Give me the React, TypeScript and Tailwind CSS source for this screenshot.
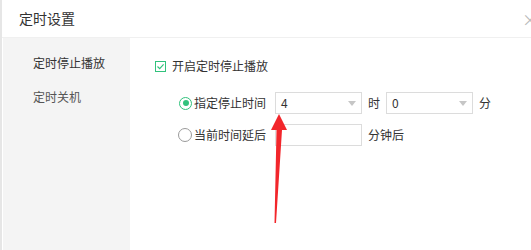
import React from 'react';

const font = { fontFamily: '"Noto Sans CJK SC", "Noto Sans", sans-serif' };

const Caret = () => (
  <svg width="8" height="5" viewBox="0 0 8 5" className="mr-[5px]">
    <path d="M0 0 L8 0 L4 5 Z" fill="#c6c6c6" />
  </svg>
);

const Select = ({ value }: { value: string }) => (
  <div className="flex h-[22px] w-[87px] items-center justify-between border border-[#dcdcdc] bg-white pl-[5px]">
    <span className="text-[12px] text-[#333]">{value}</span>
    <Caret />
  </div>
);

export default function App() {
  return (
    <div
      className="relative flex h-[250px] w-[531px] flex-col overflow-hidden border-l-2 border-[#e6e6e6] bg-white"
      style={font}
    >
      <div className="flex h-[38px] shrink-0 items-center justify-between border-b border-[#f0f0f0] pl-[17px]">
        <span className="text-[14px] text-[#333]">定时设置</span>
        <span className="mr-[-7px] text-[16px] text-[#bbb]">×</span>
      </div>

      <div className="flex flex-1">
        <div className="ml-px flex w-[127px] flex-col gap-[22px] bg-[#f4f4f4] pl-[30px] pt-[19px]">
          <span className="text-[12px] leading-[12px] text-[#333]">定时停止播放</span>
          <span className="text-[12px] leading-[12px] text-[#555]">定时关机</span>
        </div>

        <div className="flex flex-1 flex-col pl-[25px] pt-[22px]">
          <div className="flex h-[12px] items-center gap-[6px]">
            <span className="flex h-[11px] w-[11px] items-center justify-center border border-[#31c27c]">
              <svg width="9" height="9" viewBox="0 0 9 9">
                <path d="M1.5 4.5 L3.7 6.6 L7.6 2.4" fill="none" stroke="#31c27c" strokeWidth="1.2" />
              </svg>
            </span>
            <span className="text-[12px] text-[#333]">开启定时停止播放</span>
          </div>

          <div className="mt-[20px] flex h-[22px] items-center pl-[24px]">
            <span className="flex h-[13px] w-[13px] items-center justify-center rounded-full border-[1.5px] border-[#31c27c]">
              <span className="h-[6px] w-[6px] rounded-full bg-[#31c27c]" />
            </span>
            <span className="ml-[2px] w-[81px] text-[12px] text-[#333]">指定停止时间</span>
            <Select value="4" />
            <span className="mx-[6px] text-[12px] text-[#333]">时</span>
            <Select value="0" />
            <span className="ml-[6px] text-[12px] text-[#333]">分</span>
          </div>

          <div className="mt-[10px] flex h-[22px] items-center pl-[23px]">
            <span className="h-[14px] w-[14px] rounded-full border-[1.5px] border-[#9a9a9a]" />
            <span className="ml-[2px] w-[81px] text-[12px] text-[#333]">当前时间延后</span>
            <div className="h-[22px] w-[87px] border border-[#dcdcdc] bg-white" />
            <span className="ml-[6px] text-[12px] text-[#333]">分钟后</span>
          </div>
        </div>
      </div>

      <svg
        className="pointer-events-none absolute left-0 top-0"
        width="531"
        height="250"
        viewBox="0 0 531 250"
      >
        <path
          d="M279 114 L287 130 L282 130 L276 223 L274.5 223 L276.5 130 L271 130 Z"
          fill="#f2262b"
          transform="translate(-2 0)"
        />
      </svg>
    </div>
  );
}
